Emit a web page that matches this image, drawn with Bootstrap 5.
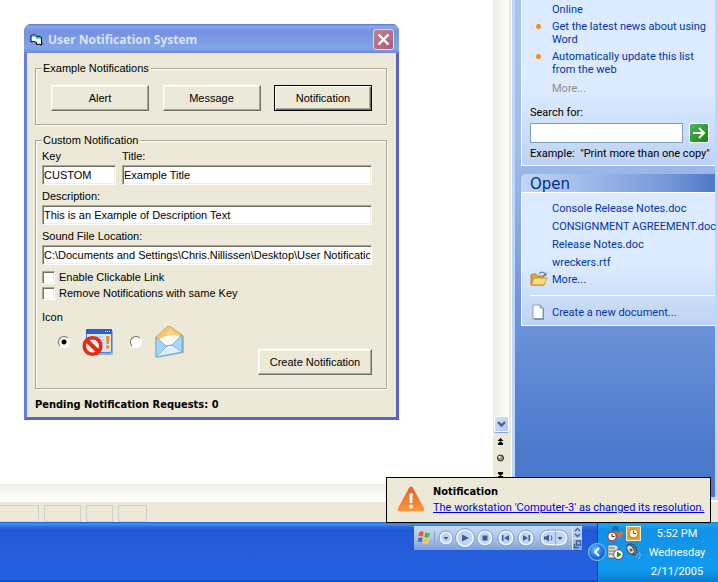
<!DOCTYPE html>
<html lang="en">
<head>
<meta charset="utf-8">
<meta name="viewport" content="width=device-width, initial-scale=1">
<title>User Notification System</title>
<link href="https://cdn.jsdelivr.net/npm/bootstrap@5.3.0/dist/css/bootstrap.min.css" rel="stylesheet">
<style>
:root { --face: #ece9d8; --shade: #aca899; --dark: #716f64; --ink: #0033ad; }
body { font-family: "Liberation Sans", Arial, sans-serif; font-size: 11px; line-height: 14px; color: #000; background: #fff; }
.desktop { min-height: 100vh; overflow: hidden; }
.shrink { min-width: 0; }
.plain { border: 0; padding: 0; background: none; line-height: 0; }

/* Word processor behind the dialog */
.vscroll { width: 16px; background: linear-gradient(90deg, #eeede5, #fefefb); }
.vscroll-tools { background: var(--face); height: 68px; }
.vscroll-btn { width: 15px; height: 16px; border: 1px solid #fff; border-radius: 2px; background: linear-gradient(135deg, #d5e2fe, #aec8f7); box-shadow: 0 1px 1px #7ba0dc; }
.hscroll { height: 16px; background: linear-gradient(#f0efe9, #fefefb); border-top: 1px solid #eeede5; }
.frame-edge { width: 3px; background: var(--face); border-right: 1px solid #fff; }
.status-strip { height: 22px; background: var(--face); border-top: 2px solid #fff; padding-top: 3px; gap: 5px; }
.status-cell { border: 1px solid #d0cfcb; height: 17px; }
.cell-a { width: 39px; border-left: 0; } .cell-b { width: 37px; } .cell-c { width: 27px; } .cell-d { width: 29px; }

/* Task pane */
.task-pane { width: 206px; border: solid #bdd6fb; border-width: 0 3px 3px; padding-left: 6px; background: linear-gradient(#a9c4f0 0, #a2bce8 30%, #7096da 62%, #4a78cb 92%); font-family: Roboto, sans-serif; font-size: 11px; line-height: 13px; color: #000; }
.task-pane a { color: var(--ink); text-decoration: none; }
.task-box { border: solid #fff; border-width: 0 0 1px 1px; background: linear-gradient(#dcebff 55%, #bdd2f4); padding-left: 8px; }
.help-box { height: 166px; padding-top: 3px; }
.indent { padding-left: 22px; }
.tip-item { position: relative; margin-top: 4px; }
.tip-item::before { content: ""; position: absolute; left: 6px; top: 4px; width: 5px; height: 5px; border-radius: 50%; background: #f68b1f; }
.tip-more { margin-top: 6px; }
.task-pane .more-off { color: #8d8d84; }
.find-label { margin-top: 11px; }
.find-row { gap: 6px; padding: 4px 6px 4px 0; }
.find-box { height: 20px; border: 1px solid #7b9ebd; background: #fff; font-size: 11px; padding: 0 3px; border-radius: 0; }
.go-btn { width: 20px; height: 20px; border: 1px solid #fff; border-radius: 2px; background: linear-gradient(135deg, #57b557, #128512); }
.pane-head { margin-top: 8px; height: 18px; border-radius: 5px 0 0 0; padding-left: 9px; background: linear-gradient(90deg, #c1d6f8, #7698d8 75%, #4e78c7); color: #002d87; font: 15px/20px "DejaVu Sans", sans-serif; }
.open-box { border-top-width: 1px; height: 134px; padding-top: 9px; }
.file-item { height: 18px; line-height: 13px; }
.file-link { height: 16px; }
.file-more { margin-top: -3px; }
.pane-rule { border-top: 1px solid #fff; }

/* Dialog */
.dlg { position: absolute; left: 24px; top: 24px; width: 375px; border: 3px solid #6b7cda; border-right-color: #5a62cc; border-bottom-color: #5a62cc; border-top: 0; border-radius: 7px 7px 0 0; background: #7b96e0; }
.dlg-title { height: 29px; margin: 0 -3px; padding: 2px 5px 0 6px; border-radius: 7px 7px 0 0; background: linear-gradient(#5b74cc 0, #8aa8ee 8%, #7590df 25%, #7d9ce5 60%, #80a6ea 85%, #7084d6); color: #d8e4f8; font: bold 12px/18px "Open Sans", "Noto Sans", sans-serif; }
.close-btn { width: 21px; height: 21px; border: 1px solid #d2d7f4; border-radius: 3px; background: linear-gradient(135deg, #c4818f, #a35f7a); }
.dlg-body { background: var(--face); padding: 8px 9px 5px 8px; }
.group { border: 1px solid var(--shade); box-shadow: 1px 1px 0 #fff, inset 1px 1px 0 #fff; padding: 0 14px 0 6px; margin: 0; }
.group legend { float: none; width: auto; margin: 0; padding: 0 2px 0 1px; font-size: inherit; line-height: 14px; background: var(--face); }
.group-a { height: 64px; padding: 10px 14px 0 15px; }
.group-a legend { margin-left: -9px; }
.group-b { height: 256px; margin-top: 8px; }
.push { height: 26px; border: 1px solid; border-color: #fff var(--dark) var(--dark) #fff; box-shadow: inset -1px -1px 0 var(--shade), inset 1px 1px 0 #f6f4ea; background: var(--face); border-radius: 0; color: #000; padding: 0; text-align: center; }
.push-sm { width: 98px; }
.push-lg { width: 114px; }
.push-default { border-color: #000; box-shadow: inset 1px 1px 0 #fff, inset -1px -1px 0 var(--dark), inset -2px -2px 0 var(--shade); }
.well { display: block; height: 20px; border: 1px solid; border-color: var(--shade) #fff #fff var(--shade); box-shadow: inset 1px 1px 0 var(--dark), inset -1px -1px 0 #f1efe2; background: #fff; padding: 0 1px; border-radius: 0; color: #000; }
.field-row { gap: 6px; }
.key-col { width: 74px; }
.lab { display: block; line-height: 18px; height: 18px; }
.lab-next { margin-top: 2px; }
.opt-line { line-height: 16px; }
.tick { appearance: none; width: 13px; height: 13px; margin: 0; border: 1px solid; border-color: var(--shade) #fff #fff var(--shade); box-shadow: inset 1px 1px 0 var(--dark), inset -1px -1px 0 #f1efe2; background: #fff; }
.dot { appearance: none; width: 12px; height: 12px; margin: 0; border: 1px solid; border-color: var(--dark) #fff #fff var(--dark); border-radius: 50%; background: #fff; }
.dot:checked { background: radial-gradient(circle, #000 2px, #fff 3px); }
.pending { margin-top: 9px; font: bold 11px/14px "DejaVu Sans Condensed", sans-serif; }
.lift { margin-top: -10px; }

/* Balloon */
.balloon { position: absolute; right: 7px; bottom: 59px; width: 325px; height: 46px; border: 1px solid #000; background: var(--face); font-family: Roboto, sans-serif; font-size: 11px; line-height: 16px; padding: 0 9px 0 10px; }
.balloon-head { font: bold 11px/16px "DejaVu Sans Condensed", sans-serif; }
.balloon a { color: #0000f0; text-decoration: underline; white-space: nowrap; }

/* Taskbar */
.bar-bottom { height: 60px; background: linear-gradient(#2664d8 0, #4292ee 4%, #2a68de 8%, #2157d5 14%, #245edc 50%, #2561df 95%, #1941a5); }
.player { width: 168px; height: 24px; margin-top: 4px; background: linear-gradient(#c9dcf4, #a9c3ea 50%, #7fa1d9); }
.tray { width: 121px; margin-left: 15px; background: linear-gradient(#0c80d8 0, #1ba5f4 4%, #1191e8 12%, #129aee 80%, #0d7bd0); border-left: 1px solid #0a3fa8; color: #fff; font-family: Roboto, sans-serif; font-size: 11px; line-height: 19px; padding-top: 2px; }
.tray-toggle { position: absolute; left: -11px; top: 20px; width: 20px; height: 20px; }
.tray-icons { width: 38px; margin-left: 8px; padding-top: 1px; }
</style>
<script src="https://cdn.jsdelivr.net/npm/bootstrap@5.3.0/dist/js/bootstrap.bundle.min.js"></script>
</head>
<body>
<div class="desktop d-flex flex-column position-relative">

  <div class="d-flex flex-grow-1">
    <div class="d-flex flex-column flex-grow-1 shrink">
      <div class="d-flex flex-grow-1">
        <div class="flex-grow-1 bg-white"></div>
        <div class="vscroll d-flex flex-column justify-content-end">
          <div class="vscroll-tools d-flex flex-column align-items-center">
            <button class="plain vscroll-btn" aria-label="Scroll down"><svg width="11" height="12" viewBox="0 0 11 12"><path d="M2 4l3.500 3.500L9 4" fill="none" stroke="#4d6185" stroke-width="2.400"/></svg></button>
            <svg width="16" height="52" viewBox="0 0 16 52"><path d="M7.500 6l3 3h-6zM7.500 9l3 3h-6zM5 12h5v1H5z"/><circle cx="7.500" cy="26" r="3" fill="#9a9a94" stroke="#222"/><circle cx="6.500" cy="25" r="1" fill="#fff"/><path d="M5 40h5v1H5zM4.500 41h6l-3 3zM4.500 44h6l-3 3z"/></svg>
          </div>
        </div>
      </div>
      <div class="hscroll"></div>
    </div>
    <div class="frame-edge"></div>
    <aside class="task-pane">
      <section class="task-box help-box">
        <div class="indent"><a href="#">Online</a></div>
        <div class="indent tip-item"><a href="#">Get the latest news about using<br>Word</a></div>
        <div class="indent tip-item"><a href="#">Automatically update this list<br>from the web</a></div>
        <div class="indent tip-more"><a href="#" class="more-off">More...</a></div>
        <label for="find" class="d-block find-label">Search for:</label>
        <div class="d-flex find-row">
          <input id="find" class="find-box flex-grow-1 shrink" type="text">
          <button class="plain go-btn flex-shrink-0" aria-label="Search"><svg width="18" height="18" viewBox="0 0 18 18"><path d="M3 9h11M9 4l5 5-5 5" fill="none" stroke="#fff" stroke-width="2"/></svg></button>
        </div>
        <div class="text-nowrap">Example:&nbsp; "Print more than one copy"</div>
      </section>
      <h2 class="pane-head mb-0">Open</h2>
      <section class="task-box open-box">
        <div class="indent file-item"><a href="#">Console Release Notes.doc</a></div>
        <div class="indent file-item text-nowrap"><a href="#">CONSIGNMENT AGREEMENT.doc</a></div>
        <div class="indent file-item"><a href="#">Release Notes.doc</a></div>
        <div class="indent file-item"><a href="#">wreckers.rtf</a></div>
        <a href="#" class="d-flex align-items-center file-link file-more"><svg class="me-1" width="18" height="16" viewBox="0 0 18 16"><path d="M1 14V4l1-1h4l1 2h7v9z" fill="#e0a640" stroke="#a8741c" stroke-width=".8"/><path d="M1 14l3-7h13l-3 7z" fill="#fbdc7c" stroke="#b8862c" stroke-width=".8"/><path d="M9 3c2-3 5-2 6 0" fill="none" stroke="#6885b5" stroke-width="1.300"/><path d="M16.500 1v4h-4z" fill="#6885b5"/></svg>More...</a>
        <div class="pane-rule mt-2 mb-2"></div>
        <a href="#" class="d-flex align-items-center file-link"><svg class="me-1" width="18" height="16" viewBox="0 0 18 16"><path d="M4 2h7l3 3v11H4z" fill="#8992a4"/><path d="M3 1h7l3 3v10.500H3z" fill="#fff" stroke="#7a8caa" stroke-width=".8"/><path d="M10 1v3h3z" fill="#b8cbe6" stroke="#6c7e9d" stroke-width=".6"/></svg>Create a new document...</a>
      </section>
    </aside>
  </div>

  <div class="status-strip d-flex">
    <div class="status-cell cell-a"></div>
    <div class="status-cell cell-b"></div>
    <div class="status-cell cell-c"></div>
    <div class="status-cell cell-d"></div>
  </div>

  <footer class="bar-bottom d-flex justify-content-end">
    <div class="player">
      <svg class="d-block" width="168" height="24" viewBox="0 0 168 24">
        <g stroke="#fff" stroke-width=".3"><path d="M5 6q3-2 5 0l-1 5q-3-2-5 0z" fill="#e9572b"/><path d="M11 6q3 2 6 0l-2 5q-2 2-5 0z" fill="#5cae40"/><path d="M4 12q3-2 5 0l-1 5q-3-2-5 0z" fill="#3b76d6"/><path d="M10 12q2 2 5 0l-1 5q-2 2-5 0z" fill="#f1c22e"/></g>
        <path d="M20.500 5v14" stroke="#8ba8d8"/>
        <g fill="#dbe8f9" stroke="#7f9fd2"><circle cx="32" cy="12" r="7"/><circle cx="51" cy="12" r="9.500"/><circle cx="71" cy="12" r="8"/><circle cx="92" cy="12" r="8"/><circle cx="112" cy="12" r="8"/><rect x="126" y="4" width="28" height="16" rx="8"/></g>
        <g fill="#c0d5f2" stroke="#f7fbff" stroke-width="1.200"><circle cx="32" cy="12" r="5.500"/><circle cx="51" cy="12" r="8"/><circle cx="71" cy="12" r="6.500"/><circle cx="92" cy="12" r="6.500"/><circle cx="112" cy="12" r="6.500"/><rect x="127.500" y="5.500" width="25" height="13" rx="6.500"/></g>
        <path d="M141.500 5v14" stroke="#8ba8d8"/>
        <g fill="#3c5f98"><path d="M29.500 11h5L32 14zM48 8.500l7 3.500-7 3.500zM68.500 9.500h5v5h-5zM88 9h1.500v6H88zM95 9v6l-5-3zM109 9v6l5-3zM114.500 9h1.500v6h-1.500zM130 10.500h2l3-2v7l-3-2h-2zM143.500 11h5L146 14z"/><path d="M137 9.500q2 2.500 0 5" fill="none" stroke="#3c5f98"/></g>
        <path d="M158.500 0v24M159 12.500h9" stroke="#e4eefb"/>
        <g fill="none" stroke="#3a62ac" stroke-width="1.300"><path d="M161 5l2.500-2.500L166 5M161 8l2.500 2.500L166 8M162.500 15h4v4h-4zM160.500 18v3.500h4"/></g>
      </svg>
    </div>
    <div class="tray d-flex position-relative">
      <button class="plain tray-toggle" aria-label="Show hidden icons"><svg width="20" height="20" viewBox="0 0 20 20"><defs><radialGradient id="orb" cx=".4" cy=".35"><stop offset="0" stop-color="#6dbcfa"/><stop offset="1" stop-color="#1169d6"/></radialGradient></defs><circle cx="10" cy="10" r="8.500" fill="url(#orb)" stroke="#8ec7f8"/><path d="M12 6l-4 4 4 4" fill="none" stroke="#fff" stroke-width="2"/></svg></button>
      <div class="tray-icons">
        <svg class="d-block" width="38" height="38" viewBox="0 0 38 38">
          <circle cx="9.500" cy="4" r="3.200" fill="#2f66b0"/><path d="M4 11q0-5 5-5 5 0 5 6z" fill="#4f9d78"/><path d="M12 9q2-3 5-2l-1 5q-2-1-4 0z" fill="#e86b35"/><path d="M11 12q3-1 5 1l-2 3q-2-1-4-1z" fill="#4285df"/><circle cx="6" cy="11.500" r="4.300" fill="#fff" stroke="#c03a26" stroke-width="1.300"/><path d="M6 9v2.500h2.500" fill="none" stroke="#222"/>
          <rect x="20.500" y="1.500" width="14" height="14" fill="#e7a33b" stroke="#fff3cf"/><circle cx="27.500" cy="8.500" r="4.500" fill="#fff3d2" stroke="#a86c18"/><path d="M27.500 5.500v3h2.500" fill="none" stroke="#8a5210"/>
          <path d="M2 20h8l2 2v11H2z" fill="#e1e0d6" stroke="#68675d" stroke-width=".8"/><path d="M3 23h6M3 26h6M3 29h5" stroke="#6d6d68"/><circle cx="12.500" cy="29.500" r="4.800" fill="#fff" stroke="#333" stroke-width=".8"/><path d="M11 26.500l4.500 3-4.500 3z" fill="#17931d"/>
          <path d="M21 20q5-3 9 2 2 5 0 8-4 1-8-4z" fill="#6e7278" stroke="#333a45" stroke-width=".8"/><ellipse cx="24.500" cy="24.500" rx="3.200" ry="4.800" transform="rotate(-30 24.500 24.500)" fill="#d7d9dc" stroke="#444"/><circle cx="25" cy="25" r="1.500" fill="#555a62"/><path d="M31 28q1 2-1 4M33.500 27q2 4-1 7" fill="none" stroke="#78baf4"/>
        </svg>
      </div>
      <div class="flex-grow-1 text-center pe-1 me-1">
        <div>5:52 PM</div><div>Wednesday</div><div>2/11/2005</div>
      </div>
    </div>
  </footer>

  <main class="dlg">
    <div class="dlg-title d-flex align-items-center">
      <svg class="me-1" width="14" height="14" viewBox="0 0 14 14"><path d="M11 8l3 3-4 2z" fill="#5c6a78" opacity=".8"/><path d="M1 2.500q3-2 5 0l.5 1q3-1 5 1V12q-2-1.500-5-.5V9.500q-3-2-5.500-.5z" fill="#fff" stroke="#000"/><path d="M1.500 2.500q2.500-1.500 4 0V4q-2-1-4 0zM6 4.500q2.500-1 5 .5V6.500q-2-1.500-5-.5z" fill="#18b6c4"/></svg>
      <span class="flex-grow-1">User Notification System</span>
      <button class="plain close-btn" aria-label="Close"><svg width="19" height="19" viewBox="0 0 19 19"><path d="M4.500 4.500l10 10M14.500 4.500l-10 10" stroke="#fff" stroke-width="2.400"/></svg></button>
    </div>
    <form class="dlg-body">
      <fieldset class="group group-a">
        <legend>Example Notifications</legend>
        <div class="d-flex justify-content-between">
          <button type="button" class="push push-sm">Alert</button>
          <button type="button" class="push push-sm">Message</button>
          <button type="button" class="push push-sm push-default">Notification</button>
        </div>
      </fieldset>
      <fieldset class="group group-b">
        <legend>Custom Notification</legend>
        <div class="d-flex field-row">
          <div class="key-col"><label class="lab" for="key">Key</label><input id="key" class="well w-100" type="text" value="CUSTOM"></div>
          <div class="flex-grow-1"><label class="lab" for="ttl">Title:</label><input id="ttl" class="well w-100" type="text" value="Example Title"></div>
        </div>
        <label class="lab lab-next" for="desc">Description:</label>
        <input id="desc" class="well w-100" type="text" value="This is an Example of Description Text">
        <label class="lab lab-next" for="snd">Sound File Location:</label>
        <input id="snd" class="well w-100" type="text" value="C:\Documents and Settings\Chris.Nillissen\Desktop\User Notification">
        <div class="d-flex align-items-center opt-line mt-1"><input id="c1" class="tick me-1" type="checkbox"><label for="c1">Enable Clickable Link</label></div>
        <div class="d-flex align-items-center opt-line"><input id="c2" class="tick me-1" type="checkbox"><label for="c2">Remove Notifications with same Key</label></div>
        <div class="opt-line mt-2">Icon</div>
        <div class="d-flex align-items-center ps-3">
          <input id="r1" class="dot me-2" type="radio" name="icon" checked aria-label="Blocked window icon">
          <label for="r1" class="ms-1"><svg class="d-block" width="32" height="32" viewBox="0 0 32 32"><rect x="5" y="4" width="26" height="25" rx="2" fill="#5c77a8" opacity=".55"/><rect x="4.500" y="3.500" width="25" height="23" rx="1.500" fill="#d3e5fa" stroke="#4b82d5"/><path d="M4 4q0-1 2-1h23q1 0 1 1v4H4z" fill="#2e5cc8"/><path d="M23 5.500h1M25 5.500h1M27 5.500h1" stroke="#fff"/><path d="M9 11h12M14 14h8M19 17h3" stroke="#9bbae3"/><path d="M24 10h3.500l-.8 8h-2z" fill="#f28a15"/><circle cx="25.700" cy="21" r="1.700" fill="#f28a15"/><circle cx="10.500" cy="20" r="8.300" fill="#f1efec" stroke="#e32e15" stroke-width="3.600"/><path d="M5 14.500l11 11" stroke="#e32e15" stroke-width="4"/></svg></label>
          <input id="r2" class="dot ms-3 me-2" type="radio" name="icon" aria-label="Envelope icon">
          <label for="r2" class="ms-1"><svg class="d-block" width="32" height="34" viewBox="0 0 32 34"><path d="M3 14L14 3q2-1.500 4 0l12 8v17L3 33z" fill="#6f88a4" opacity=".5"/><path d="M2 12L13 2q2-1.500 4 0l11 8v17L2 32z" fill="#f6c671" stroke="#cf994c" stroke-width=".8"/><path d="M5 14q8-6 19-4l3 3-11 9L4 17z" fill="#fffaf0" stroke="#dba95b" stroke-width=".6"/><path d="M9 10l7-6 9 6z" fill="#f9cf83"/><path d="M2 12l10 9 6-1 10-10v17L2 32z" fill="#a9d6f8" stroke="#6ba3d5" stroke-width=".8"/><path d="M2 32l11-11 5-1 10 7z" fill="#def1ff" stroke="#70a5d7" stroke-width=".8"/></svg></label>
        </div>
        <div class="text-end lift"><button type="button" class="push push-lg">Create Notification</button></div>
      </fieldset>
      <div class="pending">Pending Notification Requests: 0</div>
    </form>
  </main>

  <div class="balloon d-flex align-items-center" role="status">
    <svg class="me-2 flex-shrink-0" width="28" height="28" viewBox="0 0 28 28"><defs><linearGradient id="warn" x2="0" y2="1"><stop offset="0" stop-color="#e85f1c"/><stop offset="1" stop-color="#f69a45"/></linearGradient></defs><path d="M12 2q2-3 4 0l11 20q1 3-1 3.500H2Q0 25 1 22z" fill="url(#warn)"/><path d="M12.200 8q1.800-1.500 3.600 0l-.7 9h-2.200z" fill="#fff"/><circle cx="14" cy="20.500" r="1.900" fill="#fff"/></svg>
    <div><div class="balloon-head">Notification</div><a href="#">The workstation 'Computer-3' as changed its resolution.</a></div>
  </div>
</div>
</body>
</html>
